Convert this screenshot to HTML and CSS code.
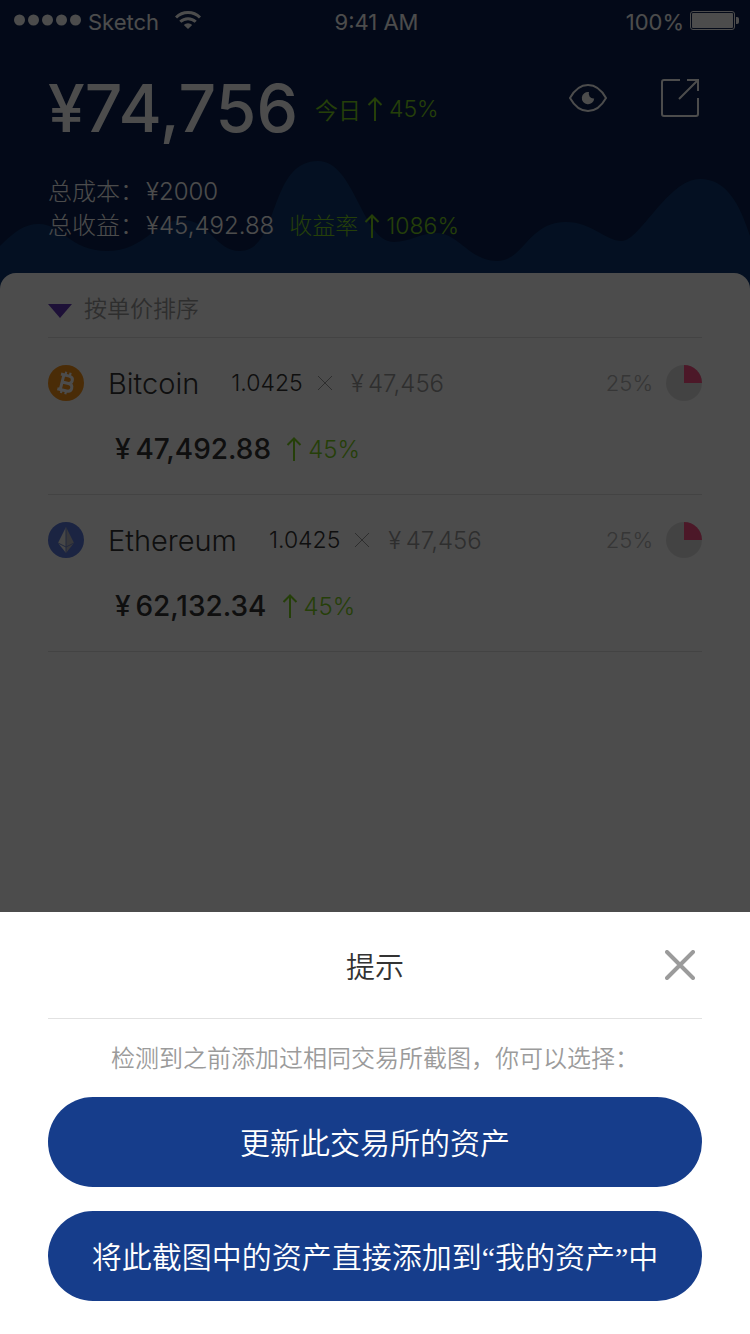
FILE: index.html
```html
<!DOCTYPE html>
<html lang="zh-CN">
<head>
<meta charset="utf-8">
<meta name="viewport" content="width=device-width, initial-scale=1">
<title>资产</title>
<link rel="stylesheet" href="styles.css">
</head>
<body>
<svg class="defs" aria-hidden="true">
  <symbol id="arrow-up" viewBox="0 0 16 24"><path d="M8 24V1.500M1.500 8L8 1.500L14.500 8" fill="none" stroke="currentColor" stroke-width="2"/></symbol>
  <symbol id="times" viewBox="0 0 16 16"><path d="M1 1l14 14M15 1L1 15" fill="none" stroke="currentColor" stroke-width="1"/></symbol>
  <symbol id="pie" viewBox="0 0 36 36"><circle cx="18" cy="18" r="18" fill="#e2e2e2"/><path d="M18 18V0a18 18 0 0 1 18 18z" fill="#ff5286"/></symbol>
</svg>
<div class="app">
  <header class="header">
    <svg class="waves" viewBox="0 0 750 113" preserveAspectRatio="none" aria-hidden="true">
      <path d="M0 86C14 72 24 64 39 64C62 64 70 91 107 91C145 91 155 60 182 60C210 60 215 91 240 91C280 91 268 1 318 1C355 1 362 82 394 82C410 82 420 73 437 73C458 73 470 101 497 101C524 101 528 62 566 62C592 62 605 81 622 81C640 81 668 19 700 19C727 19 740 45 750 76V113H0z" fill="#0f3872"/>
    </svg>
    <div class="status">
      <div class="status-side">
        <svg width="68" height="12" viewBox="0 0 68 12" fill="currentColor" aria-hidden="true"><circle cx="5.500" cy="6" r="5.500"/><circle cx="19.500" cy="6" r="5.500"/><circle cx="33.500" cy="6" r="5.500"/><circle cx="47.500" cy="6" r="5.500"/><circle cx="61.500" cy="6" r="5.500"/></svg>
        <span class="status-text">Sketch</span>
        <svg class="wifi" width="26" height="18" viewBox="0 0 26 18" fill="none" stroke="currentColor" stroke-width="3" aria-hidden="true"><path d="M1 6.500a17 17 0 0 1 24 0M5.300 10.800a11 11 0 0 1 15.400 0"/><path d="M8.800 14a6 6 0 0 1 8.400 0L13 18z" fill="currentColor" stroke="none"/></svg>
      </div>
      <time class="status-text">9:41 AM</time>
      <div class="status-side status-end">
        <span class="status-text">100%</span>
        <svg width="49" height="19" viewBox="0 0 49 19" aria-hidden="true"><rect x=".5" y=".5" width="44" height="18" rx="2.500" fill="none" stroke="currentColor"/><rect x="2" y="2" width="41" height="15" rx="1" fill="currentColor"/><path d="M46 6h1q2 0 2 2v3q0 2-2 2h-1z" fill="currentColor"/></svg>
      </div>
    </div>
    <div class="summary">
      <strong class="total">¥74,756</strong>
      <span class="gain today">今日<svg class="arrow"><use href="#arrow-up"/></svg>45%</span>
      <div class="actions">
        <button class="icon-button" type="button" aria-label="隐藏金额">
          <svg width="38" height="28" viewBox="0 0 38 28" fill="none" aria-hidden="true"><path d="M1 14C6 5 12 1 19 1s13 4 18 13C32 23 26 27 19 27S6 23 1 14z" stroke="currentColor" stroke-width="2" stroke-linejoin="round"/><path d="M20 8a6.200 6.200 0 1 0 5.200 6.500A4.800 4.800 0 0 1 20 8z" fill="currentColor"/></svg>
        </button>
        <button class="icon-button" type="button" aria-label="分享">
          <svg width="38" height="38" viewBox="0 0 38 38" fill="none" stroke="currentColor" stroke-width="2" aria-hidden="true"><path d="M19 1H3Q1 1 1 3v32q0 2 2 2h32q2 0 2-2V19M26 1h11v11M37 1L18 20"/></svg>
        </button>
      </div>
    </div>
    <div class="details">
      <div class="detail">总成本：<span class="figure">¥2000</span></div>
      <div class="detail">总收益：<span class="figure">¥45,492.88</span><span class="gain rate">收益率<svg class="arrow"><use href="#arrow-up"/></svg>1086%</span></div>
    </div>
  </header>
  <main class="assets">
    <button class="sort" type="button"><svg class="caret" width="24" height="14" viewBox="0 0 24 14" aria-hidden="true"><path d="M0 0h24L12 14z" fill="#6236b8"/></svg>按单价排序</button>
    <article class="asset">
      <svg class="coin" viewBox="0 0 36 36" aria-hidden="true"><circle cx="18" cy="18" r="18" fill="#f7931a"/><g transform="rotate(14 18 18)" fill="none" stroke="#fff" stroke-width="3"><path d="M11 10.500h8.500q4 0 4 3.700t-4 3.700H14h6.500q4.300 0 4.300 3.900t-4.300 3.900H11M14 10.500v15"/><path d="M15.500 7v4M20 7v4M15.500 25v4M20 25v4" stroke-width="2.200"/></g></svg>
      <div class="asset-body">
        <div class="asset-row">
          <h2 class="name">Bitcoin</h2><span class="amount">1.0425</span><svg class="times" role="img" aria-label="乘"><use href="#times"/></svg><span class="price">¥&#8201;47,456</span>
          <span class="share">25%<svg class="pie"><use href="#pie"/></svg></span>
        </div>
        <div class="value-row"><strong class="value">¥&#8201;47,492.88</strong><span class="gain"><svg class="arrow"><use href="#arrow-up"/></svg>45%</span></div>
      </div>
    </article>
    <article class="asset">
      <svg class="coin" viewBox="0 0 36 36" aria-hidden="true"><circle cx="18" cy="18" r="18" fill="#5a78dc"/><path d="M18 5l-8 16 8 10z" fill="#ededed"/><path d="M18 5l8 16-8 10z" fill="#bdbdc5"/><path d="M10 21l8 4 8-4M18 5v26" fill="none" stroke="#7388cc"/></svg>
      <div class="asset-body">
        <div class="asset-row">
          <h2 class="name">Ethereum</h2><span class="amount">1.0425</span><svg class="times" role="img" aria-label="乘"><use href="#times"/></svg><span class="price">¥&#8201;47,456</span>
          <span class="share">25%<svg class="pie"><use href="#pie"/></svg></span>
        </div>
        <div class="value-row"><strong class="value">¥&#8201;62,132.34</strong><span class="gain"><svg class="arrow"><use href="#arrow-up"/></svg>45%</span></div>
      </div>
    </article>
  </main>
</div>
<div class="backdrop">
  <section class="sheet" role="dialog" aria-modal="true" aria-labelledby="sheet-title">
    <div class="sheet-head">
      <h1 class="sheet-title" id="sheet-title">提示</h1>
      <button class="close" type="button" aria-label="关闭"><svg width="30" height="30" viewBox="0 0 30 30" aria-hidden="true"><path d="M2 2l26 26M28 2L2 28" stroke="#9b9b9b" stroke-width="4" stroke-linecap="round"/></svg></button>
    </div>
    <p class="message">检测到之前添加过相同交易所截图，你可以选择：</p>
    <button class="choice" type="button">更新此交易所的资产</button>
    <button class="choice" type="button">将此截图中的资产直接添加到“我的资产”中</button>
  </section>
</div>
</body>
</html>
```
FILE: styles.css
```css
* { box-sizing: border-box; }
body {
  margin: 0;
  font-family: Inter, "Noto Sans CJK SC", sans-serif;
  font-size: 24px;
  font-weight: 300;
  color: #333;
}
button {
  margin: 0;
  padding: 0;
  border: 0;
  background: none;
  font: inherit;
  color: inherit;
  cursor: pointer;
}
svg { display: block; flex: none; }
h1, h2, p { margin: 0; }
.defs { display: none; }

.app { min-height: 100vh; background: #0f3872; }
.header { position: relative; background: #0a2050; color: #fff; }
.waves { position: absolute; left: 0; bottom: 0; width: 100%; height: 113px; }
.status {
  position: relative;
  display: flex;
  align-items: center;
  justify-content: space-between;
  height: 40px;
  padding: 0 11px 0 14px;
  font-size: 22px;
  font-weight: 400;
}
.status-side { display: flex; flex: 1; align-items: center; gap: 6px; }
.status-end { justify-content: flex-end; }
.status-text { padding-top: 4px; }
.wifi { margin-left: 10px; }

.summary {
  position: relative;
  display: flex;
  align-items: center;
  padding: 28px 48px 0;
}
.total { font-size: 66px; font-weight: 500; line-height: 80px; }
.gain { display: inline-flex; align-items: center; gap: 6px; color: #7ed321; }
.today { margin-left: 17px; padding-top: 2px; font-size: 23px; font-weight: 350; }
.arrow { width: 16px; height: 24px; }
.actions {
  display: flex;
  align-items: center;
  gap: 54px;
  margin: 0 3px 20px auto;
}
.details { position: relative; padding: 27px 48px 30px; }
.detail { display: flex; align-items: center; line-height: 34px; }
.figure { margin-left: 2px; }
.rate { margin-left: 15px; font-size: 23px; }

.assets {
  min-height: 640px;
  padding: 0 48px;
  border-radius: 16px 16px 0 0;
  background: #fff;
}
.sort {
  display: flex;
  align-items: center;
  gap: 12px;
  width: 100%;
  height: 65px;
  padding-top: 4px;
  border-bottom: 1px solid #e2e2e2;
  font-size: 23px;
  font-weight: 350;
  color: #9b9b9b;
}
.caret { margin-top: 7px; }
.asset {
  display: flex;
  gap: 24px;
  padding: 27px 0 25px;
  border-bottom: 1px solid #e2e2e2;
}
.coin, .pie { width: 36px; height: 36px; }
.asset-body { flex: 1; }
.asset-row { display: flex; align-items: center; height: 36px; }
.name { font-size: 29px; font-weight: 300; }
.amount { margin-left: 32px; font-size: 23px; }
.times { width: 16px; height: 16px; margin: 0 18px 0 14px; color: #9b9b9b; }
.price { color: #9b9b9b; }
.share {
  display: flex;
  align-items: center;
  gap: 13px;
  margin-left: auto;
  font-size: 22px;
  color: #b4b4b4;
}
.value-row {
  display: flex;
  align-items: center;
  gap: 15px;
  height: 40px;
  margin: 28px 0 0 7px;
}
.value { font-size: 28px; font-weight: 500; }

.backdrop {
  position: fixed;
  inset: 0;
  display: flex;
  align-items: flex-end;
  background: rgba(0, 0, 0, 0.7);
}
.sheet {
  display: flex;
  flex-direction: column;
  width: 100%;
  padding: 0 48px 33px;
  background: #fff;
  font-family: "Liberation Serif", "Noto Sans CJK SC", sans-serif;
  font-weight: 350;
}
.sheet-head {
  display: grid;
  grid-template-columns: 1fr auto 1fr;
  align-items: center;
  height: 107px;
  border-bottom: 1px solid #e2e2e2;
}
.sheet-title { grid-column: 2; font-size: 29px; font-weight: 350; }
.close { justify-self: end; margin-right: 7px; }
.message {
  padding: 20px 0 18px;
  line-height: 40px;
  text-align: center;
  color: #9b9b9b;
}
.choice {
  min-height: 90px;
  padding-bottom: 3px;
  border-radius: 45px;
  background: #163d8b;
  color: #fff;
  font-size: 30px;
}
.choice + .choice { margin-top: 24px; }
```
